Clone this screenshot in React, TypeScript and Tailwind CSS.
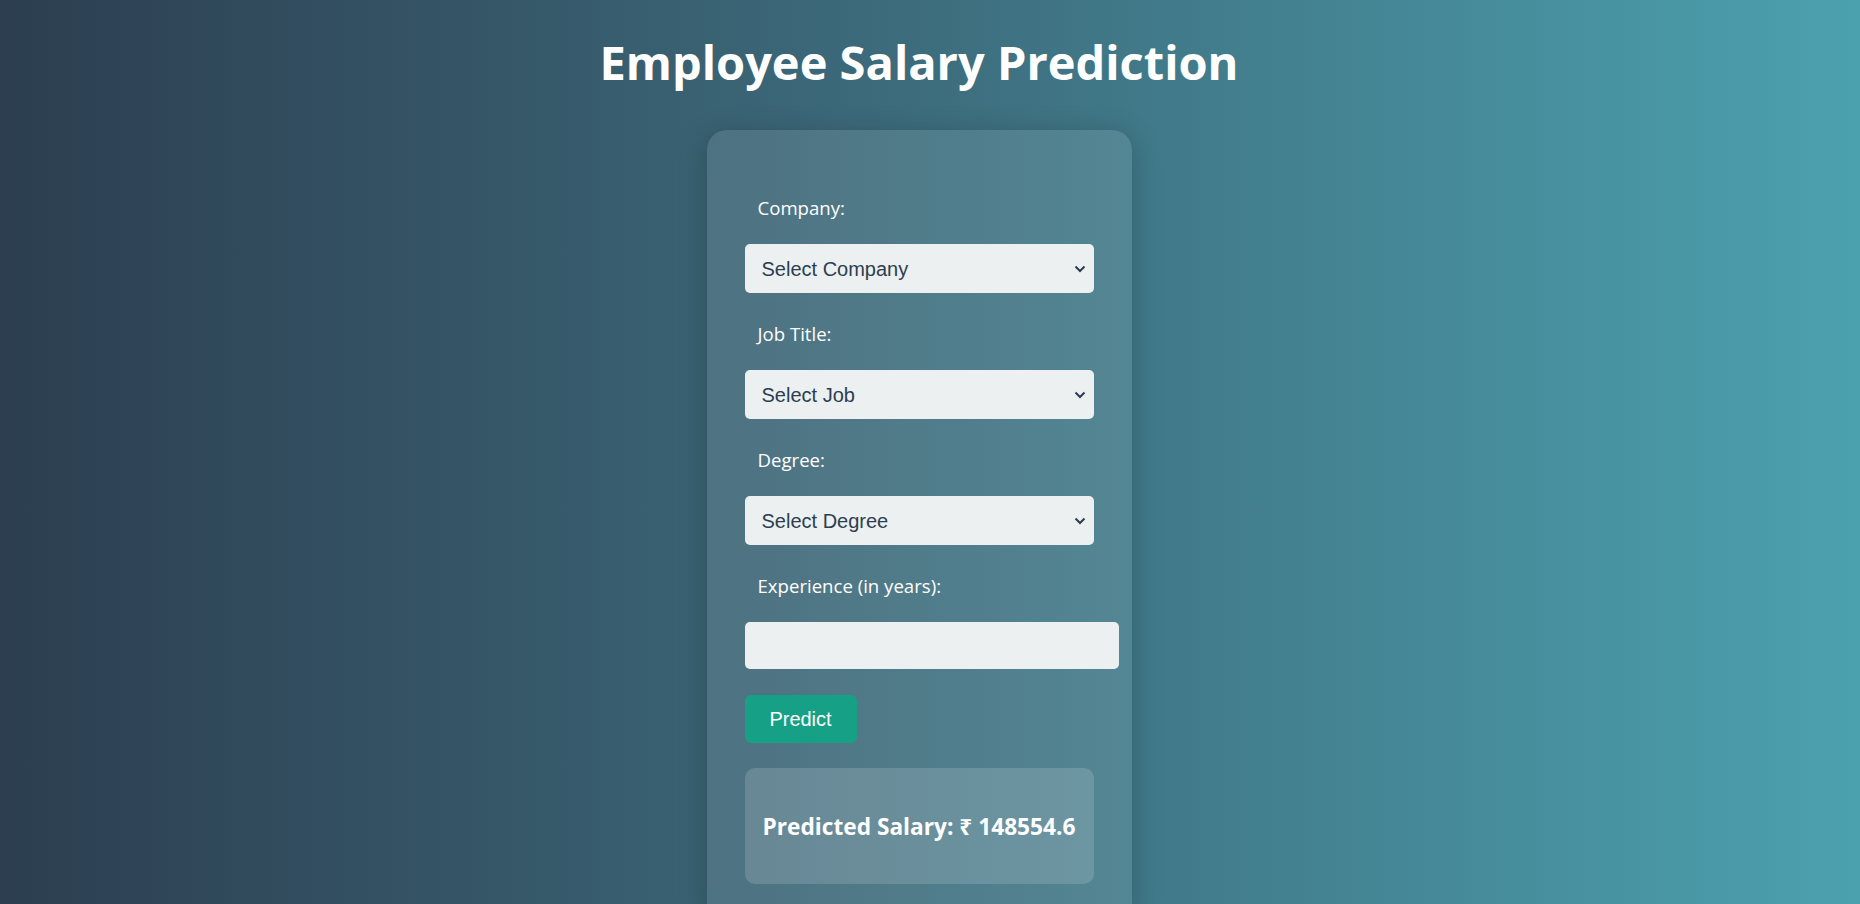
const sans = "font-['Open_Sans','Noto_Sans',sans-serif]";
const arial = "font-['Liberation_Sans',Arial,sans-serif]";

function Chevron() {
  return (
    <svg
      className="pointer-events-none absolute right-[4px] top-1/2 -translate-y-1/2"
      width="12"
      height="8"
      viewBox="0 0 12 8"
      fill="none"
    >
      <path d="M1.5 1.5 L6 6 L10.5 1.5" stroke="#2c3e50" strokeWidth="2" />
    </svg>
  );
}

function Field({ label, placeholder }: { label: string; placeholder: string }) {
  return (
    <>
      <label className={`mt-[26px] mb-[21px] block h-[30px] pl-[13px] text-[18.6px] leading-[30px] text-white ${sans}`}>
        {label}
      </label>
      <div className="relative h-[49px] w-full">
        <select
          defaultValue=""
          className={`h-full w-full appearance-none rounded-[5px] bg-[#ecf0f1] pl-[17px] pr-[30px] text-[20px] text-[#2c3e50] outline-none ${arial}`}
        >
          <option value="">{placeholder}</option>
        </select>
        <div className="pointer-events-none absolute right-[4px] top-0 h-full w-[16px]">
          <Chevron />
        </div>
      </div>
    </>
  );
}

export default function App() {
  return (
    <div className="h-screen overflow-hidden bg-gradient-to-r from-[#2c3e50] to-[#4ca1af]">
      <div className="flex flex-col items-center pr-[22px]">
        <h1 className={`mt-[34px] text-[47px] font-bold leading-[56px] text-white ${sans}`}>
          Employee Salary Prediction
        </h1>

        <div className="mt-[40px] w-[425px] rounded-[20px] bg-white/10 px-[38px] pt-[37px] pb-[38px] shadow-[0_4px_30px_rgba(0,0,0,0.2)]">
          <div className="flex flex-col">
            <Field label="Company:" placeholder="Select Company" />
            <Field label="Job Title:" placeholder="Select Job" />
            <Field label="Degree:" placeholder="Select Degree" />

            <label className={`mt-[26px] mb-[21px] block h-[30px] pl-[13px] text-[18.6px] leading-[30px] text-white ${sans}`}>
              Experience (in years):
            </label>
            <input
              type="number"
              className={`h-[47px] w-[374px] rounded-[5px] bg-[#ecf0f1] px-[12px] text-[20px] text-[#2c3e50] outline-none ${arial}`}
            />

            <button
              className={`mt-[26px] h-[48px] w-[112px] rounded-[6px] bg-[#16a085] text-[20px] text-white ${arial}`}
            >
              Predict
            </button>

            <div className="mt-[25px] flex h-[116px] items-center justify-center rounded-[10px] bg-white/15 pt-[2px]">
              <p className={`text-[22.7px] font-bold text-white ${sans}`}>
                Predicted Salary: ₹ 148554.6
              </p>
            </div>
          </div>
        </div>
      </div>
    </div>
  );
}
